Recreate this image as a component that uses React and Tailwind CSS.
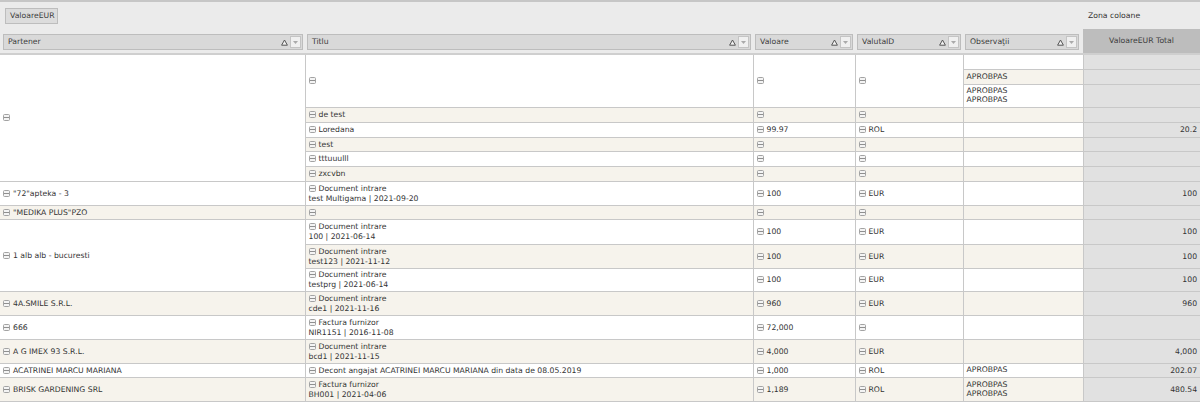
const Expand = () => (
  <svg className="inline-block mr-[3px] shrink-0" width="7" height="7" viewBox="0 0 7 7">
    <rect x="0.5" y="0.5" width="6" height="6" rx="1" fill="#f4f4f4" stroke="#a3a3a3" />
    <path d="M1 3.5H6" stroke="#8f8f8f" />
  </svg>
);

const Sort = () => (
  <svg width="7" height="7" viewBox="0 0 7 7">
    <path d="M3.5 1L6.4 6.2H0.6Z" fill="#f2f2f2" stroke="#555" strokeWidth="1" />
  </svg>
);

const HeaderField = ({ label, pad }) => (
  <th className={`h-[25px] p-0 pb-[3px] font-normal text-left align-bottom bg-[#ebebeb] border-b-2 border-[#cfcfcf] ${pad}`}>
    <div className="flex items-center h-[16px] pl-[4px] pr-[1px] bg-[#d9d9d9] border border-[#bdbdbd] text-[#3c3c3c]">
      <span className="flex-1">{label}</span>
      <Sort />
      <span className="ml-[2px] flex items-center justify-center w-[11px] h-[12px] bg-[#f0f0f0] border border-[#c4c4c4]">
        <svg width="5" height="3" viewBox="0 0 5 3">
          <path d="M0 0H5L2.5 3Z" fill="#aaa" />
        </svg>
      </span>
    </div>
  </th>
);

const cell = "p-0 px-[3px] border border-[#c8c8c8] align-middle leading-[9px]";

const Exp = ({ children, sub }) => (
  <>
    <div className="flex items-center whitespace-nowrap">
      <Expand />
      {children}
    </div>
    {sub && <div className="mt-[1px] whitespace-nowrap">{sub}</div>}
  </>
);

const Row = ({ h, alt, partener, title, sub, valoare, valuta, obs, total, skipPartener, skipMid }) => {
  const bg = alt ? "bg-[#f6f3ec]" : "bg-white";
  return (
    <tr className={h}>
      {!skipPartener && (
        <td className={`${cell} ${bg} border-l-0`}>
          <Exp>{partener}</Exp>
        </td>
      )}
      {!skipMid && (
        <>
          <td className={`${cell} ${bg}`}>
            <Exp sub={sub}>{title}</Exp>
          </td>
          <td className={`${cell} ${bg}`}><Exp>{valoare}</Exp></td>
          <td className={`${cell} ${bg}`}><Exp>{valuta}</Exp></td>
        </>
      )}
      <td className={`${cell} ${bg}`}>
        {obs && <div className="pb-[1px]">{obs.map((o, i) => <div key={i}>{o}</div>)}</div>}
      </td>
      <td className={`${cell} bg-[#e1e1e1] text-right border-r-0`}>{total}</td>
    </tr>
  );
};

export default function App() {
  return (
    <div className="w-[1200px] h-[402px] overflow-hidden bg-white text-[7.7px] text-[#333] font-['DejaVu_Sans',sans-serif]">
      <table className="table-fixed border-collapse w-[1200px]">
        <colgroup>
          <col className="w-[305px]" />
          <col className="w-[448px]" />
          <col className="w-[102px]" />
          <col className="w-[108px]" />
          <col className="w-[120px]" />
          <col className="w-[117px]" />
        </colgroup>
        <thead>
          <tr className="h-[28px]">
            <th colSpan={5} className="p-0 pl-[5px] font-normal text-left bg-[#ebebeb] border-t-2 border-[#c6c6c6]">
              <span className="inline-block h-[16px] leading-[14px] pl-[4px] pr-[3px] bg-[#dcdcdc] border border-[#bdbdbd] text-[#3c3c3c]">ValoareEUR</span>
            </th>
            <th className="p-0 pl-[5px] font-normal text-left bg-[#ebebeb] border-t-2 border-[#c6c6c6]">Zona coloane</th>
          </tr>
          <tr>
            <HeaderField label="Partener" pad="pl-[3px] pr-[2px]" />
            <HeaderField label="Titlu" pad="pl-[2px] pr-[2px]" />
            <HeaderField label="Valoare" pad="pl-[2px] pr-[2px]" />
            <HeaderField label="ValutaID" pad="pl-[2px] pr-[2px]" />
            <HeaderField label="Observaţii" pad="pl-[2px] pr-[4px]" />
            <th className="p-0 font-normal text-center bg-[#bdbdbd] text-[#3c3c3c] border-b-2 border-[#cfcfcf]">ValoareEUR Total</th>
          </tr>
        </thead>
        <tbody>
          <tr className="h-[15px]">
            <td rowSpan={8} className={`${cell} bg-white border-l-0`}><Exp /></td>
            <td rowSpan={3} className={`${cell} bg-white`}><Exp /></td>
            <td rowSpan={3} className={`${cell} bg-white`}><Exp /></td>
            <td rowSpan={3} className={`${cell} bg-white`}><Exp /></td>
            <td className={`${cell} bg-white`} />
            <td className={`${cell} bg-[#e1e1e1] border-r-0`} />
          </tr>
          <Row h="h-[15px]" skipPartener skipMid alt obs={["APROBPAS"]} />
          <Row h="h-[23px]" skipPartener skipMid obs={["APROBPAS", "APROBPAS"]} />
          <Row h="h-[15px]" skipPartener alt title="de test" />
          <Row h="h-[15px]" skipPartener title="Loredana" valoare="99.97" valuta="ROL" total="20.2" />
          <Row h="h-[14px]" skipPartener alt title="test" />
          <Row h="h-[15px]" skipPartener title="tttuuulll" />
          <Row h="h-[15px]" skipPartener alt title="zxcvbn" />
          <Row h="h-[24px]" partener={'"72"apteka - 3'} title="Document intrare" sub="test Multigama | 2021-09-20" valoare="100" valuta="EUR" total="100" />
          <Row h="h-[14px]" alt partener={'"MEDIKA PLUS"PZO'} />
          <tr className="h-[25px]">
            <td rowSpan={3} className={`${cell} bg-white border-l-0`}><Exp>1 alb alb - bucuresti</Exp></td>
            <td className={`${cell} bg-white`}><Exp sub="100 | 2021-06-14">Document intrare</Exp></td>
            <td className={`${cell} bg-white`}><Exp>100</Exp></td>
            <td className={`${cell} bg-white`}><Exp>EUR</Exp></td>
            <td className={`${cell} bg-white`} />
            <td className={`${cell} bg-[#e1e1e1] text-right border-r-0`}>100</td>
          </tr>
          <Row h="h-[24px]" skipPartener alt title="Document intrare" sub="test123 | 2021-11-12" valoare="100" valuta="EUR" total="100" />
          <Row h="h-[23px]" skipPartener title="Document intrare" sub="testprg | 2021-06-14" valoare="100" valuta="EUR" total="100" />
          <Row h="h-[24px]" alt partener="4A.SMILE S.R.L." title="Document intrare" sub="cde1 | 2021-11-16" valoare="960" valuta="EUR" total="960" />
          <Row h="h-[24px]" partener="666" title="Factura furnizor" sub="NIR1151 | 2016-11-08" valoare="72,000" />
          <Row h="h-[24px]" alt partener="A G IMEX 93 S.R.L." title="Document intrare" sub="bcd1 | 2021-11-15" valoare="4,000" valuta="EUR" total="4,000" />
          <Row h="h-[14px]" partener="ACATRINEI MARCU MARIANA" title="Decont angajat ACATRINEI MARCU MARIANA din data de 08.05.2019" valoare="1,000" valuta="ROL" obs={["APROBPAS"]} total="202.07" />
          <Row h="h-[24px]" alt partener="BRISK GARDENING SRL" title="Factura furnizor" sub="BH001 | 2021-04-06" valoare="1,189" valuta="ROL" obs={["APROBPAS", "APROBPAS"]} total="480.54" />
        </tbody>
      </table>
    </div>
  );
}
